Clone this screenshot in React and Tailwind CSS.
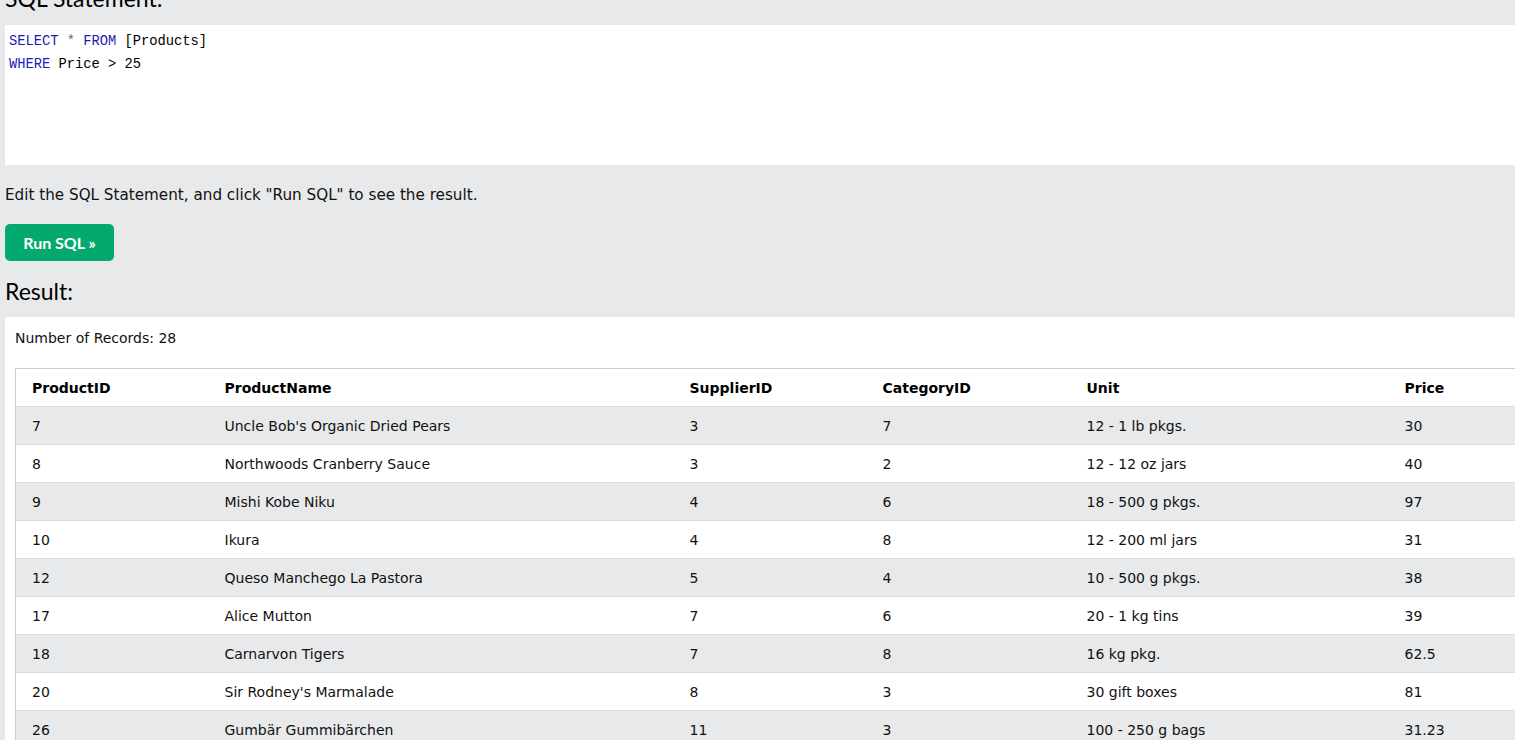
import React from "react";

const rows = [
  ["7", "Uncle Bob's Organic Dried Pears", "3", "7", "12 - 1 lb pkgs.", "30"],
  ["8", "Northwoods Cranberry Sauce", "3", "2", "12 - 12 oz jars", "40"],
  ["9", "Mishi Kobe Niku", "4", "6", "18 - 500 g pkgs.", "97"],
  ["10", "Ikura", "4", "8", "12 - 200 ml jars", "31"],
  ["12", "Queso Manchego La Pastora", "5", "4", "10 - 500 g pkgs.", "38"],
  ["17", "Alice Mutton", "7", "6", "20 - 1 kg tins", "39"],
  ["18", "Carnarvon Tigers", "7", "8", "16 kg pkg.", "62.5"],
  ["20", "Sir Rodney's Marmalade", "8", "3", "30 gift boxes", "81"],
  ["26", "Gumbär Gummibärchen", "11", "3", "100 - 250 g bags", "31.23"],
  ["27", "Schoggi Schokolade", "11", "3", "100 - 100 g pieces", "43.9"],
];

const headers = ["ProductID", "ProductName", "SupplierID", "CategoryID", "Unit", "Price"];
const widths = ["w-[193px]", "w-[465px]", "w-[193px]", "w-[204px]", "w-[318px]", "w-[200px]"];

export default function App() {
  return (
    <div className="w-[1515px] h-[740px] overflow-hidden bg-[#e7e9eb] pl-[5px] text-black">
      <div
        className="-mt-[17px] h-[42px] text-[23px] leading-[30px] text-[#000]"
        style={{ fontFamily: "Lato, 'Noto Sans', sans-serif" }}
      >
        SQL Statement:
      </div>
      <div
        className="bg-white h-[140px] pl-[4px] pt-[5px] text-[13.75px] leading-[23px]"
        style={{ fontFamily: "'Liberation Mono', 'DejaVu Sans Mono', monospace" }}
      >
        <div>
          <span className="text-[#1c1cb8]">SELECT</span>{" "}
          <span className="text-[#666]">*</span>{" "}
          <span className="text-[#1c1cb8]">FROM</span> [Products]
        </div>
        <div>
          <span className="text-[#1c1cb8]">WHERE</span> Price &gt; 25
        </div>
      </div>
      <div
        className="mt-[20px] text-[15.2px] leading-[21px] text-[#111]"
        style={{ fontFamily: "'DejaVu Sans', Verdana, sans-serif" }}
      >
        Edit the SQL Statement, and click "Run SQL" to see the result.
      </div>
      <button
        className="mt-[18px] block w-[109px] h-[37px] rounded-[5px] bg-[#04aa6d] text-white font-bold text-[16px]"
        style={{ fontFamily: "Lato, Roboto, sans-serif" }}
      >
        Run SQL »
      </button>
      <div
        className="mt-[15px] h-[41px] text-[23px] leading-[30px]"
        style={{ fontFamily: "Lato, 'Noto Sans', sans-serif" }}
      >
        Result:
      </div>
      <div
        className="bg-white pl-[10px] pt-[12px] h-[500px]"
        style={{ fontFamily: "'DejaVu Sans', Verdana, sans-serif" }}
      >
        <div className="text-[14px] leading-[19px] text-[#111]">Number of Records: 28</div>
        <table className="mt-[20px] border-collapse border border-[#ccc] text-[14px] w-[1573px] table-fixed">
          <thead>
            <tr className="h-[38px] bg-white">
              {headers.map((h, i) => (
                <th key={h} className={`${widths[i]} text-left font-bold pl-[16px] pt-[2px] align-middle`}>
                  {h}
                </th>
              ))}
            </tr>
          </thead>
          <tbody>
            {rows.map((r, ri) => (
              <tr
                key={ri}
                className={`h-[38px] border-t border-[#ddd] ${ri % 2 === 0 ? "bg-[#e7e9eb]" : "bg-white"}`}
              >
                {r.map((c, ci) => (
                  <td key={ci} className="pl-[16px] pt-[2px] align-middle text-[#111]">
                    {c}
                  </td>
                ))}
              </tr>
            ))}
          </tbody>
        </table>
      </div>
    </div>
  );
}
